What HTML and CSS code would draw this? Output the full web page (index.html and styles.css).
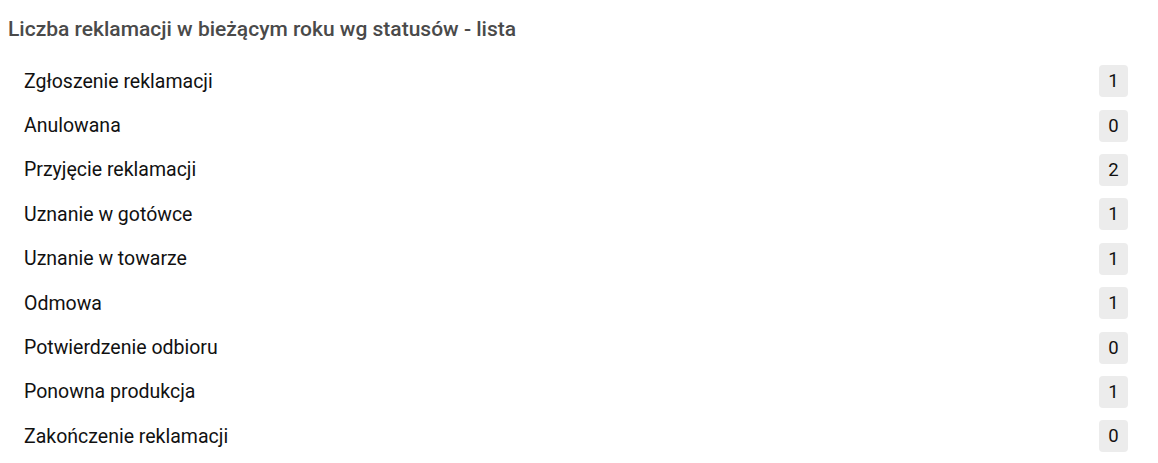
FILE: index.html
```html
<!DOCTYPE html>
<html lang="pl">
<head>
<meta charset="utf-8">
<link rel="stylesheet" href="styles.css">
</head>
<body>
<div class="panel">
  <h2 class="title">Liczba reklamacji w bieżącym roku wg statusów - lista</h2>
  <ul class="list">
    <li class="row"><span class="label">Zgłoszenie reklamacji</span><span class="badge">1</span></li>
    <li class="row"><span class="label">Anulowana</span><span class="badge">0</span></li>
    <li class="row"><span class="label">Przyjęcie reklamacji</span><span class="badge">2</span></li>
    <li class="row"><span class="label">Uznanie w gotówce</span><span class="badge">1</span></li>
    <li class="row"><span class="label">Uznanie w towarze</span><span class="badge">1</span></li>
    <li class="row"><span class="label">Odmowa</span><span class="badge">1</span></li>
    <li class="row"><span class="label">Potwierdzenie odbioru</span><span class="badge">0</span></li>
    <li class="row"><span class="label">Ponowna produkcja</span><span class="badge">1</span></li>
    <li class="row"><span class="label">Zakończenie reklamacji</span><span class="badge">0</span></li>
  </ul>
</div>
</body>
</html>
```
FILE: styles.css
```css
html, body {
  margin: 0;
  padding: 0;
  background: #fff;
}
body {
  font-family: Roboto, "Liberation Sans", sans-serif;
}
.panel {
  padding: 14px 30px 0 8px;
}
.title {
  margin: 0 0 15px 0;
  font-size: 21px;
  font-weight: 500;
  color: #4a4a4a;
  line-height: 30px;
}
.list {
  list-style: none;
  margin: 0;
  padding: 0 0 0 16px;
}
.row {
  display: flex;
  align-items: center;
  justify-content: space-between;
  height: 44.4px;
}
.label {
  font-size: 19.5px;
  color: #111;
}
.badge {
  display: flex;
  align-items: center;
  justify-content: center;
  width: 29px;
  height: 32px;
  background: #ececec;
  border-radius: 4px;
  font-size: 18.5px;
  color: #111;
}
```
